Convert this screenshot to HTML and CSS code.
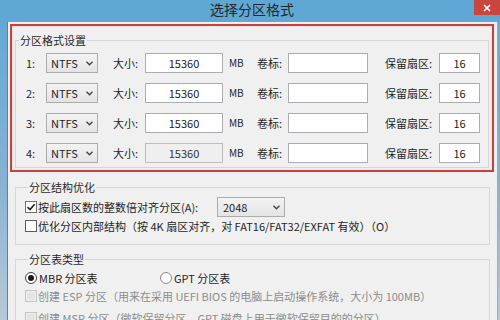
FILE: index.html
```html
<!DOCTYPE html>
<html lang="zh-CN">
<head>
  <meta charset="UTF-8" />
  <meta name="viewport" content="width=device-width, initial-scale=1.0"/>
  <title>选择分区格式</title>
  <link rel="stylesheet" href="styles.css">
</head>
<body>
  <div class="window">
    <div class="titlebar">
      <span class="title">选择分区格式</span>
      <button class="close-btn">
        <svg width="8" height="8" viewBox="0 0 8 8"><path d="M1 1L7 7M7 1L1 7" stroke="#fff" stroke-width="1.6" fill="none"/></svg>
      </button>
    </div>

    <div class="client">
      <!-- highlighted partition format group -->
      <div class="highlight">
        <fieldset class="group format-group">
          <legend>分区格式设置</legend>
          <div class="part-rows">
            <div class="part-row">
              <span class="num">1:</span>
              <div class="combo fs-combo"><span>NTFS</span><svg class="chev" width="7" height="5" viewBox="0 0 7 5"><path d="M0.5 0.8L3.5 3.8L6.5 0.8" stroke="#444" stroke-width="1.4" fill="none"/></svg></div>
              <span class="lbl lbl-size">大小:</span>
              <input class="box box-size" value="15360">
              <span class="unit">MB</span>
              <span class="lbl lbl-vol">卷标:</span>
              <input class="box box-vol" value="">
              <span class="lbl lbl-res">保留扇区:</span>
              <input class="box box-res" value="16">
            </div>
            <div class="part-row">
              <span class="num">2:</span>
              <div class="combo fs-combo"><span>NTFS</span><svg class="chev" width="7" height="5" viewBox="0 0 7 5"><path d="M0.5 0.8L3.5 3.8L6.5 0.8" stroke="#444" stroke-width="1.4" fill="none"/></svg></div>
              <span class="lbl lbl-size">大小:</span>
              <input class="box box-size" value="15360">
              <span class="unit">MB</span>
              <span class="lbl lbl-vol">卷标:</span>
              <input class="box box-vol" value="">
              <span class="lbl lbl-res">保留扇区:</span>
              <input class="box box-res" value="16">
            </div>
            <div class="part-row">
              <span class="num">3:</span>
              <div class="combo fs-combo"><span>NTFS</span><svg class="chev" width="7" height="5" viewBox="0 0 7 5"><path d="M0.5 0.8L3.5 3.8L6.5 0.8" stroke="#444" stroke-width="1.4" fill="none"/></svg></div>
              <span class="lbl lbl-size">大小:</span>
              <input class="box box-size" value="15360">
              <span class="unit">MB</span>
              <span class="lbl lbl-vol">卷标:</span>
              <input class="box box-vol" value="">
              <span class="lbl lbl-res">保留扇区:</span>
              <input class="box box-res" value="16">
            </div>
            <div class="part-row">
              <span class="num">4:</span>
              <div class="combo fs-combo"><span>NTFS</span><svg class="chev" width="7" height="5" viewBox="0 0 7 5"><path d="M0.5 0.8L3.5 3.8L6.5 0.8" stroke="#444" stroke-width="1.4" fill="none"/></svg></div>
              <span class="lbl lbl-size">大小:</span>
              <input class="box box-size" value="15360" disabled>
              <span class="unit">MB</span>
              <span class="lbl lbl-vol">卷标:</span>
              <input class="box box-vol" value="">
              <span class="lbl lbl-res">保留扇区:</span>
              <input class="box box-res" value="16">
            </div>
          </div>
        </fieldset>
      </div>

      <!-- alignment options -->
      <fieldset class="group opt-group">
        <legend>分区结构优化</legend>
        <div class="opt-row first">
          <span class="check checked"><svg width="10" height="10" viewBox="0 0 10 10"><path d="M1.5 5.2L4 7.6L8.6 2.2" stroke="#222" stroke-width="1.6" fill="none"/></svg></span>
          <span class="align-label">按此扇区数的整数倍对齐分区(A):</span>
          <div class="combo align-combo"><span>2048</span><svg class="chev" width="7" height="5" viewBox="0 0 7 5"><path d="M0.5 0.8L3.5 3.8L6.5 0.8" stroke="#444" stroke-width="1.4" fill="none"/></svg></div>
        </div>
        <div class="opt-row">
          <span class="check"></span>
          <span>优化分区内部结构（按 4K 扇区对齐，对 FAT16/FAT32/EXFAT 有效）（O）</span>
        </div>
      </fieldset>

      <!-- partition table type -->
      <fieldset class="group table-group">
        <legend>分区表类型</legend>
        <div class="opt-row radio-row">
          <label class="radio-opt mbr"><span class="radio on"></span>MBR 分区表</label>
          <label class="radio-opt"><span class="radio"></span>GPT 分区表</label>
        </div>
        <div class="opt-row off esp-row">
          <span class="check dis"></span>
          <span>创建 ESP 分区（用来在采用 UEFI BIOS 的电脑上启动操作系统，大小为 100MB）</span>
        </div>
        <div class="opt-row off msr-row">
          <span class="check dis"></span>
          <span>创建 MSR 分区（微软保留分区，GPT 磁盘上用于微软保留目的的分区）</span>
        </div>
      </fieldset>
    </div>
  </div>
</body>
</html>
```

FILE: styles.css
```css
* { box-sizing: border-box; }
body {
  margin: 0;
  width: 500px;
  height: 320px;
  overflow: hidden;
  font-family: "Noto Sans CJK SC", "Noto Sans", sans-serif;
  font-size: 11px;
  line-height: 16px;
  color: #1f1f1f;
  background: #f0f0f0;
}
.window {
  height: 320px;
  display: flex;
  flex-direction: column;
  background: linear-gradient(#5fa8d5, #86b2d2 55%, #b7c9d8);
}
.titlebar {
  height: 22px;
  flex: none;
  position: relative;
  display: flex;
  justify-content: center;
  background: #5fa8d5;
}
.title {
  font-size: 14px;
  line-height: 19px;
  color: #262626;
  padding-left: 4px;
}
.close-btn {
  position: absolute;
  top: 0;
  right: 0;
  width: 26px;
  height: 15px;
  border: none;
  padding: 0;
  background: #c9463f;
  display: flex;
  align-items: center;
  justify-content: center;
}
.client {
  flex: 1;
  margin-left: 7px;
  margin-right: 2px;
  border-left: 1px solid #4f86ad;
  border-right: 1px solid #a9a9a9;
  background: #f0f0f0;
  padding: 2px 0 0 2px;
}
.highlight {
  margin-right: 3px;
  border: 2px solid #c8413f;
  box-shadow: inset 0 0 0 1px #f6e0e0;
  padding: 6px 3px 2px 3px;
}
.group {
  margin: 0;
  padding: 0;
  min-width: 0;
  border: 1px solid #d6d6d6;
}
.group legend {
  margin-left: 3px;
  padding: 0 1px;
  line-height: 16px;
  color: #2a2a2a;
}
.part-rows {
  display: flex;
  flex-direction: column;
  gap: 10px;
  padding: 5px 0 4px 10px;
}
.part-row {
  display: flex;
  align-items: center;
  height: 20px;
}
.num { width: 20px; }
.combo {
  height: 20px;
  border: 1px solid #acacac;
  background: linear-gradient(#f3f3f3, #e4e4e4);
  display: flex;
  align-items: center;
  justify-content: space-between;
  padding: 0 4px 0 4px;
  color: #222;
}
.fs-combo { width: 52px; }
.lbl { flex: none; }
.lbl-size { margin-left: 15px; width: 32px; }
.lbl-vol { width: 31px; }
.lbl-res { margin-left: 17px; width: 54px; }
.unit { margin-left: 6px; width: 28px; font-size: 10px; }
.box {
  height: 20px;
  border: 1px solid #abadb3;
  background: #fff;
  font: inherit;
  color: #222;
  text-align: center;
  padding: 0;
  margin: 0;
  outline: none;
}
.box:disabled {
  background: #efefef;
  border-color: #bdbdbd;
  color: #333;
}
.box-size { width: 78px; }
.box-vol { width: 80px; }
.box-res { width: 41px; }

.opt-group {
  margin: 7px 7px 0 5px;
  padding: 0 0 10px 9px;
}
.table-group {
  margin: 6px 7px 0 5px;
  padding: 0 0 0 9px;
}
.opt-row {
  display: flex;
  align-items: center;
  height: 16px;
}
.opt-row.first {
  height: 20px;
  margin-top: 2px;
  margin-bottom: 1px;
}
.check {
  width: 12px;
  height: 12px;
  margin-right: 1px;
  border: 1px solid #5a5a5a;
  background: #fff;
  display: inline-flex;
  align-items: center;
  justify-content: center;
  flex: none;
}
.check.checked { border-color: #707070; }
.check.dis {
  border-color: #c4c4c4;
  background: #e4e4e4;
  box-shadow: inset 0 0 0 1px #efefef;
}
.align-label { width: 179px; }
.align-combo { width: 68px; padding-left: 5px; }

.radio-row { margin-top: 3px; }
.radio-opt {
  display: flex;
  align-items: center;
}
.radio-opt.mbr { width: 135px; }
.radio {
  width: 12px;
  height: 12px;
  margin-right: 2px;
  border: 1px solid #8a8a8a;
  border-radius: 50%;
  background: #fff;
  display: inline-flex;
  align-items: center;
  justify-content: center;
}
.radio.on { border-color: #444; }
.radio.on::after {
  content: "";
  width: 6px;
  height: 6px;
  border-radius: 50%;
  background: #1a1a1a;
}
.off { color: #8c8c8c; }
.esp-row { margin-top: 2px; }
.msr-row { margin-top: 6px; }
```
